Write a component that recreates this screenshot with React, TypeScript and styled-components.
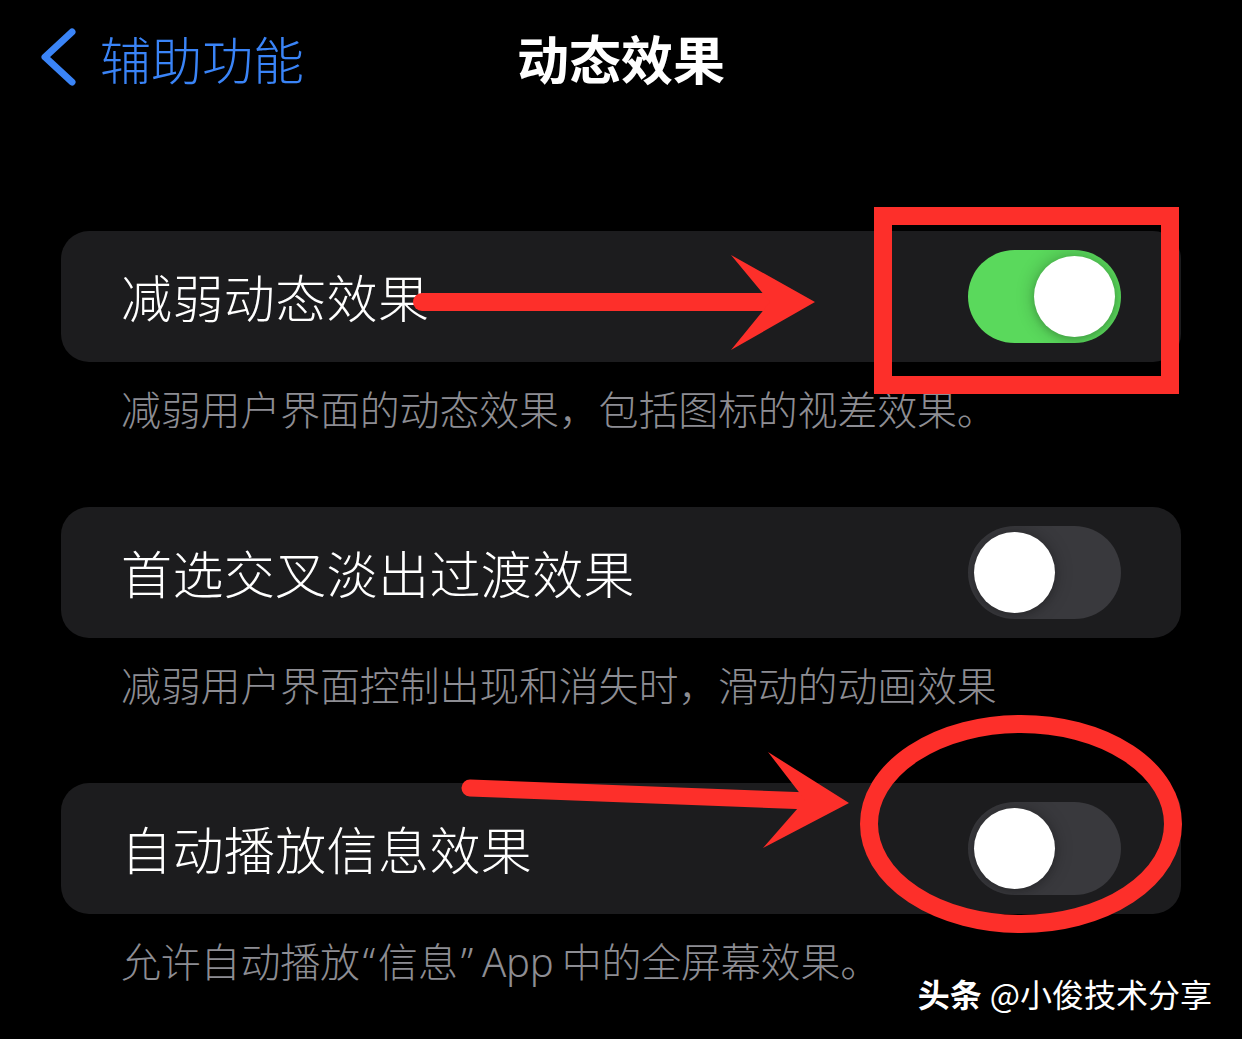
import React from "react";
import styled, { createGlobalStyle } from "styled-components";

const GlobalStyle = createGlobalStyle`
  html, body {
    margin: 0;
    padding: 0;
    background: #000;
  }
  body {
    font-family: "Noto Sans CJK SC", "Noto Sans", sans-serif;
    -webkit-font-smoothing: antialiased;
  }
`;

const Page = styled.div`
  position: relative;
  width: 1242px;
  height: 1039px;
  overflow: hidden;
  background: #000;
  color: #fff;
  font-family: "Noto Sans CJK SC", "Noto Sans", sans-serif;
`;

const Header = styled.header`
  display: grid;
  grid-template-columns: 1fr auto 1fr;
  align-items: center;
  height: 116px;
  padding: 0 40px 4px;
`;

const BackButton = styled.div`
  display: flex;
  align-items: center;
  gap: 22px;
  color: #3a84f7;
  font-size: 51px;
  font-weight: 300;
  line-height: 1;
`;

const Title = styled.h1`
  margin: 0;
  font-size: 52px;
  font-weight: 700;
  line-height: 1;
  color: #fff;
`;

const List = styled.main`
  display: flex;
  flex-direction: column;
  padding: 111px 61px 0;
`;

const Card = styled.div`
  display: flex;
  align-items: center;
  justify-content: space-between;
  height: 131px;
  padding: 0 60px;
  border-radius: 28px;
  background: #1c1c1e;
`;

const Label = styled.span`
  font-size: 51px;
  font-weight: 300;
  line-height: 1;
  color: #fff;
  letter-spacing: 0.4px;
`;

const Footer = styled.p<{ $last?: boolean }>`
  margin: 24px 0 ${(p) => (p.$last ? "0" : "73px")} 60px;
  font-family: "Noto Sans", "Noto Sans CJK SC", sans-serif;
  font-size: 40px;
  font-weight: 300;
  line-height: 48px;
  color: #8d8d93;
  letter-spacing: -0.2px;
  white-space: nowrap;
`;

const Quote = styled.span`
  margin: 0 3px;
`;

const Latin = styled.span`
  margin: 0 8px 0 6px;
`;

const Track = styled.div<{ $on: boolean }>`
  position: relative;
  display: flex;
  align-items: center;
  justify-content: ${(p) => (p.$on ? "flex-end" : "flex-start")};
  width: 153px;
  height: 93px;
  padding: 0 6px;
  box-sizing: border-box;
  border-radius: 47px;
  background: ${(p) => (p.$on ? "#5ad95c" : "#39393d")};
  overflow: hidden;
`;

const Knob = styled.div`
  width: 81px;
  height: 81px;
  border-radius: 50%;
  background: #fff;
  box-shadow: 0 0 18px rgba(0, 0, 0, 0.28), 0 3px 6px rgba(0, 0, 0, 0.12);
`;

const Watermark = styled.div`
  position: absolute;
  right: 30px;
  bottom: 30px;
  display: flex;
  align-items: baseline;
  gap: 8px;
  font-size: 32px;
  line-height: 1;
  color: #fff;
  text-shadow: 0 0 2px rgba(0, 0, 0, 0.6);
`;

const Brand = styled.span`
  font-weight: 700;
`;

const Overlay = styled.svg`
  position: absolute;
  left: 0;
  top: 0;
  pointer-events: none;
`;

const Toggle: React.FC<{ on: boolean }> = ({ on }) => (
  <Track $on={on}>
    <Knob />
  </Track>
);

const items: { label: string; footer: React.ReactNode; on: boolean }[] = [
  {
    label: "减弱动态效果",
    footer: "减弱用户界面的动态效果，包括图标的视差效果。",
    on: true,
  },
  {
    label: "首选交叉淡出过渡效果",
    footer: "减弱用户界面控制出现和消失时，滑动的动画效果",
    on: false,
  },
  {
    label: "自动播放信息效果",
    footer: (
      <>
        允许自动播放<Quote>“</Quote>信息<Quote>”</Quote>
        <Latin>App</Latin>中的全屏幕效果。
      </>
    ),
    on: false,
  },
];

const RED = "#fd2f2a";

export default function App() {
  return (
    <>
      <GlobalStyle />
      <Page>
        <Header>
          <BackButton>
            <svg width="38" height="60" viewBox="0 0 38 60">
              <path
                d="M32 4 L5 29 L32 54"
                fill="none"
                stroke="#3a84f7"
                strokeWidth="7"
                strokeLinecap="round"
                strokeLinejoin="round"
              />
            </svg>
            <span>辅助功能</span>
          </BackButton>
          <Title>动态效果</Title>
          <div />
        </Header>

        <List>
          {items.map((it, i) => (
            <React.Fragment key={it.label}>
              <Card>
                <Label>{it.label}</Label>
                <Toggle on={it.on} />
              </Card>
              <Footer $last={i === items.length - 1}>{it.footer}</Footer>
            </React.Fragment>
          ))}
        </List>

        <Watermark>
          <Brand>头条</Brand>
          <span>@小俊技术分享</span>
        </Watermark>

        <Overlay width="1242" height="1039" viewBox="0 0 1242 1039">
          <rect
            x="883"
            y="216"
            width="287"
            height="169"
            fill="none"
            stroke={RED}
            strokeWidth="18"
          />
          <line
            x1="422"
            y1="302"
            x2="778"
            y2="302"
            stroke={RED}
            strokeWidth="18"
            strokeLinecap="round"
          />
          <polygon points="731,255 815,302 731,350 770,302" fill={RED} />
          <line
            x1="470"
            y1="788"
            x2="810"
            y2="801"
            stroke={RED}
            strokeWidth="17"
            strokeLinecap="round"
          />
          <polygon points="768,752 849,803 763,848 805,800" fill={RED} />
          <ellipse
            cx="1021"
            cy="824"
            rx="152"
            ry="100"
            fill="none"
            stroke={RED}
            strokeWidth="18"
          />
        </Overlay>
      </Page>
    </>
  );
}
